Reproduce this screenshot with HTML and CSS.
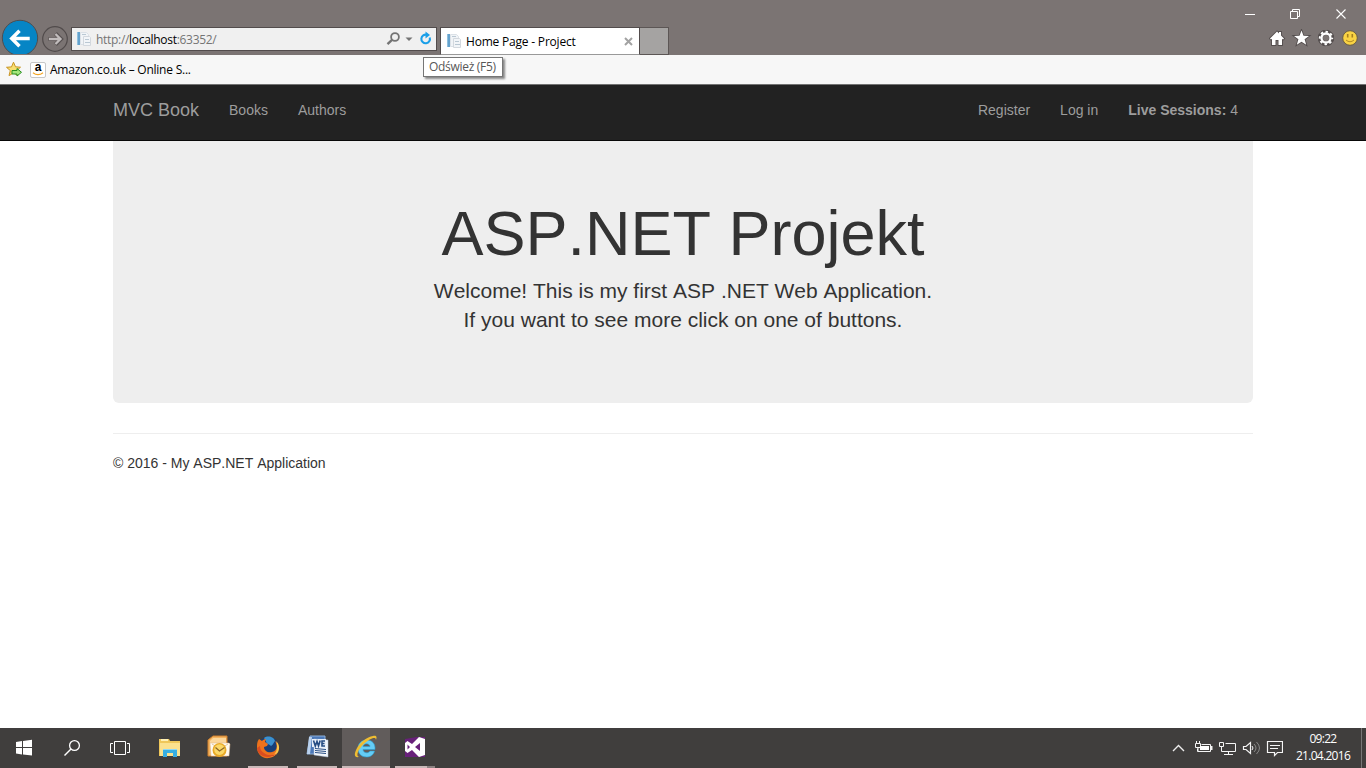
FILE: index.html
```html
<!DOCTYPE html>
<html lang="pl">
<head>
<meta charset="utf-8">
<title>Home Page - Project</title>
<link rel="stylesheet" href="styles.css">
</head>
<body>
<svg class="defs" width="0" height="0">
  <symbol id="page" viewBox="0 0 16 16">
    <rect x="1" y="1" width="3" height="13" fill="#64a2cd"/><rect x="1" y="1" width="1" height="13" fill="#8fc0df"/>
    <path d="M4.500 1.500h6l2 2v10h-8z" fill="#f1f4f7" stroke="#dbe1e7"/>
    <path d="M7.500 5.500h6l1 1v8h-7z" fill="#f2f5f8" stroke="#d3d8de"/>
    <path d="M6 3.500h4M9 8.500h4M9 11.500h5" stroke="#bac8d3"/>
  </symbol>
</svg>
<div class="screen">
  <header class="chrome">
    <div class="nav-buttons">
      <svg class="back" width="40" height="36" viewBox="0 0 40 36"><circle cx="20" cy="19.500" r="18.200" fill="#0685c5" stroke="#514b4b"/><path d="M30 20H12M19.500 12l-8 8 8 8" fill="none" stroke="#fff" stroke-width="3.600"/></svg>
      <svg class="forward" width="28" height="28" viewBox="0 0 28 28"><circle cx="14" cy="14" r="12.300" fill="none" stroke="#514b4b" stroke-width="1.200"/><path d="M7.500 14H19M14.500 8.500l5.500 5.500-5.500 5.500" fill="none" stroke="#585252" stroke-width="4"/><path d="M8 14H19M14.500 9l5 5-5 5" fill="none" stroke="#c1bcbc" stroke-width="2.300"/></svg>
    </div>
    <div class="address">
      <svg width="16" height="16"><use href="#page"/></svg>
      <span class="ui url">http://<b>localhost</b>:63352/</span>
      <svg width="50" height="18" viewBox="0 0 50 18"><circle cx="9" cy="7" r="3.900" fill="none" stroke="#747474" stroke-width="1.800"/><path d="M6.300 9.700l-4.800 4.500" stroke="#747474" stroke-width="2.400"/><path d="M19.500 7.500h7L23 11z" fill="#747474"/><path d="M43.700 7.500a4.300 4.300 0 1 1-2.800-2.700" fill="none" stroke="#1a9fe8" stroke-width="2.100"/><path d="M39.500 1.500l4.500 3.500-4.500 3.500z" fill="#1a9fe8"/></svg>
    </div>
    <div class="tab">
      <svg width="16" height="16"><use href="#page"/></svg>
      <span class="ui tab-title">Home Page - Project</span>
      <svg class="tab-close" width="9" height="9" viewBox="0 0 9 9"><path d="M1 1l7 7M8 1L1 8" stroke="#a2a2a2" stroke-width="2"/></svg>
    </div>
    <div class="new-tab"></div>
    <div class="right-tools">
      <svg class="window-controls" width="112" height="20" viewBox="0 0 112 20"><path d="M5 10.500h10M50.500 7.500h7v7h-7zM52.500 7.500v-2h7v7h-2" fill="none" stroke="#fff"/><path d="M96.500 5.500l9 9M105.500 5.500l-9 9" stroke="#fff" stroke-width="1.100"/></svg>
      <svg width="92" height="18" viewBox="0 0 92 18"><g stroke="#544e4e" stroke-width="1.800" fill="#fff" paint-order="stroke"><path d="M1 9.500L8 2.500l2 2V3h2v3.500l3 3-1 1-1-.8V16H9.500v-5h-3v5H3V9.700l-1 .8z"/><path d="M32.500 1.500l2 5.200 5.500.2-4.400 3.400 1.600 5.400-4.700-3-4.700 3 1.600-5.400L25 6.900l5.500-.2z"/></g><g fill="none"><circle cx="57" cy="9" r="5.500" stroke="#544e4e" stroke-width="5"/><circle cx="57" cy="9" r="6.200" stroke="#544e4e" stroke-width="4" stroke-dasharray="2.800 2.070"/><circle cx="57" cy="9" r="4.500" stroke="#fff" stroke-width="2.300"/><circle cx="57" cy="9" r="6.200" stroke="#fff" stroke-width="2" stroke-dasharray="2.400 2.470" stroke-dashoffset="1.200"/></g><circle cx="81" cy="9" r="7.300" fill="#f9d344" stroke="#685d45"/><path d="M78.700 5v3.500M83.300 5v3.500" stroke="#a5801f" stroke-width="1.600"/><path d="M77 11q4 3.500 8 0" fill="none" stroke="#b28d26"/></svg>
    </div>
  </header>
  <div class="favorites">
    <svg width="17" height="17" viewBox="0 0 17 17"><path d="M7.500 1.200l2 4.600 5 .4-3.800 3.300 1.200 5L7.500 12 3 14.600l1.300-5L.5 6.300l5-.4z" fill="#f8df70" stroke="#c89423" stroke-linejoin="round"/><path d="M6 9.500h5v-2l4.500 3.800L11 15v-2H6z" fill="#a4e57c" stroke="#288f20"/></svg>
    <span class="amazon"><b>a</b><svg width="12" height="4" viewBox="0 0 12 4"><path d="M1 .7q5 4 10 0" fill="none" stroke="#f5a623" stroke-width="1.300"/></svg></span>
    <span class="ui bookmark">Amazon.co.uk – Online S...</span>
    <span class="ui tooltip">Odśwież (F5)</span>
  </div>
  <main class="page">
    <nav class="navbar"><div class="container nav-inner">
      <a class="brand">MVC Book</a><a>Books</a><a>Authors</a>
      <div class="nav-right"><a>Register</a><a>Log in</a><span><b>Live Sessions:</b> 4</span></div>
    </div></nav>
    <div class="container">
      <section class="jumbotron"><h1>ASP.NET Projekt</h1><p>Welcome! This is my first ASP .NET Web Application.<br>If you want to see more click on one of buttons.</p></section>
      <hr><footer>© 2016 - My ASP.NET Application</footer>
    </div>
  </main>
  <div class="taskbar">
    <div class="slot"><svg width="18" height="18" viewBox="0 0 18 18"><path d="M1 3l6-.9v6H1zM8 2l9-1.200v7.300H8zM1 9h6v6.400l-6-.8zM8 9h9v7.600l-9-1.100z" fill="#fff"/></svg></div>
    <div class="slot"><svg width="18" height="18" viewBox="0 0 18 18"><circle cx="11.500" cy="6.500" r="4.900" fill="none" stroke="#fff" stroke-width="1.300"/><path d="M8 10l-6.500 6.500" stroke="#fff" stroke-width="1.500"/></svg></div>
    <div class="slot"><svg width="22" height="16" viewBox="0 0 22 16"><path d="M5.500 1.500h11v13h-11zM4 3.500H1.500v9H4M18 3.500h2.500v9H18" fill="none" stroke="#fff"/></svg></div>
    <div class="slot wide"><svg width="24" height="20" viewBox="0 0 24 20"><path d="M1 1h10l1 2h10v15H1z" fill="#efc75a"/><path d="M2 5h20v13H2z" fill="#fbe18e"/><path d="M3 1h7v2H3z" fill="#fff0b6"/><path d="M5 19v-8h14v8h-4v-4H9v4z" fill="#37aee2"/><path d="M5 11h14v1H5z" fill="#91d8f4"/></svg></div>
    <div class="slot outlook"><svg width="24" height="24" viewBox="0 0 24 24"><path d="M1 5l5-4h14v20H1z" fill="#f3b35f" stroke="#ce7e2c"/><path d="M6 3h13v5H3V6z" fill="#fbd79c"/><path d="M3 8h19l1 1-1 12H4z" fill="#fffaf0" stroke="#d8b28b" stroke-width=".5"/><path d="M5 9l8 5 8-5" fill="none" stroke="#dfc6a2"/><circle cx="12.500" cy="15" r="7" fill="#e9a926"/><circle cx="12.500" cy="14.600" r="5.300" fill="#fbd868"/><path d="M8.500 12.500l4 3.500 5-3.500" fill="none" stroke="#8b6424" stroke-width="1.200"/></svg></div>
    <div class="slot running"><svg width="24" height="24" viewBox="0 0 24 24"><circle cx="12.500" cy="11" r="9.500" fill="#173f78"/><path d="M8 3c4-3 10-1 11 3-1 1-2 4-4 5-2-2-5-2-5-5z" fill="#3b91ce"/><path d="M3 4l3 2c1-1 2-2 4-2L9 7l3 2-1 2-3 1c0 4 4 6 8 5 5-1 6-6 3-11 6 4 4 16-6 17C6 24 1 19 1 12c0-3 0-5 2-8z" fill="#ed721c"/><path d="M20 6c6 5 3 16-7 16 4-1 8-4 8-10 0-2 0-4-1-6z" fill="#f9c54b"/><path d="M1 13c0 5 5 9 11 9 4 0 7-1 9-4-4 3-9 3-13 0-3-2-4-4-4-7z" fill="#d94d20"/></svg></div>
    <div class="slot running word"><svg width="24" height="24" viewBox="0 0 24 24"><path d="M5 1h15v18H2z" fill="#4b78b8" stroke="#8eb0d9"/><path d="M4 2h3L5 19H2z" fill="#bad1ed"/><path d="M9 4l14 1v17l-14-2z" fill="#f3f7fc" stroke="#adbfd7" stroke-width=".5"/><path d="M10 13.500l11 1M10 15.500l11 1M10 17.500l11 1" stroke="#294e83"/><path d="M7 4h14v9L7 12z" fill="#e8eff8"/><path d="M8.500 5.500l1.800 5.500L12 6.500l1.500 4.500 1.700-5.500M20 6h-3v5h3M17 8.500h2.500" fill="none" stroke="#254c83" stroke-width="1.600"/></svg></div>
    <div class="slot running active"><svg width="26" height="24" viewBox="0 0 26 24"><path d="M21.500 16c-1 4-4 6-8 6-5 0-8.500-3.500-8.500-8.500S8.500 5 13.500 5c6 0 9 4 8.500 9.500H10c.4 3.500 5 4.500 7 1.500zM10 11.500h7c-.3-3.500-6.500-3.800-7 0z" fill="#65cdf6" stroke="#299fd5" stroke-width=".6"/><path d="M6 22c-5 1-5-3-2.500-8C7 7 14 2 20 1c4-.7 4 1.500 3 4-.2-2-1.500-2.500-4-1.500C13 6 7 12 5 17c-1 2.500-1 4.300 1 5z" fill="#efbd32"/></svg></div>
    <div class="slot running vs"><svg width="24" height="24" viewBox="0 0 24 24"><path d="M2 4l12-2h8v20H2z" fill="#68217a"/><path d="M16 2l6 2v16l-6 2-7-7-4.500 3L2 16V8l2.500-2L9 9zM17 8l-5 4 5 4zM4.500 9.500v5L7 12z" fill="#fff" fill-rule="evenodd"/></svg></div>
    <div class="tray">
      <svg width="112" height="20" viewBox="0 0 112 20"><path d="M2 13l5.500-5.500L13 13" fill="none" stroke="#eee" stroke-width="1.400"/><g fill="none" stroke="#f5f5f5"><path d="M30.500 6.500h9v7h-13v-3M24.500 5.500h5v4h-5zM25.500 3v2M28.500 3v2M27 9v4"/><path d="M40.500 8v4" stroke-width="2"/><path d="M54.500 5.500h10v8h-14v-4M57.500 14v3M53 16.500h9M48.500 4.500h4v4h-4zM50.500 9v4"/><path d="M72.500 8.500H75l4.500-4v11l-4.500-4h-2.500z" stroke-width="1.200"/><path d="M81 8q2 2 0 4"/><path d="M83 6q4 4 0 8M85.500 4q6 6 0 12" stroke="#888"/><path d="M96.500 3.500h15v11h-5l-3 3v-3h-7zM99 7.500h10M99 10.500h8" stroke-width="1.200"/></g><rect x="29" y="8" width="9" height="4" fill="#fff"/></svg>
    </div>
    <div class="clock ui"><span>09:22</span><span>21.04.2016</span></div><div class="show-desktop"></div>
  </div>
</div>
</body>
</html>
```

FILE: styles.css
```css
* { box-sizing: border-box; }
body { margin: 0; }
svg { display: block; flex: none; }
.defs { position: absolute; }
.screen { width: 1366px; height: 768px; overflow: hidden; display: flex; flex-direction: column; background: #fff; font-family: "Liberation Sans", Arial, sans-serif; }
.ui { font-family: "Open Sans", "Noto Sans", sans-serif; font-size: 12px; white-space: nowrap; }
.chrome { height: 55px; flex: none; display: flex; align-items: flex-end; background: #7b7473; }
.nav-buttons { width: 71px; height: 36px; display: flex; overflow: hidden; }
.back { height: 35px; }
.forward { margin: 6px 0 0 1px; }
.address { width: 366px; height: 24px; margin-bottom: 4px; border: 1px solid #524c4c; background: #f0f0f0; display: flex; align-items: center; padding: 0 0 0 4px; }
.url { margin-left: 4px; flex: 1; color: #747474; letter-spacing: -.3px; }
.url b { font-weight: 400; color: #000; }
.tab { width: 200px; height: 28px; margin-left: 3px; border: 1px solid #524c4c; border-bottom-color: #999; background: #fff; display: flex; align-items: center; padding: 0 6px 0 5px; }
.tab-title { margin-left: 4px; flex: 1; letter-spacing: -.2px; }
.new-tab { width: 29px; height: 28px; border: 1px solid #5c5655; border-left: 0; background: #a5a3a2; }
.right-tools { height: 55px; margin-left: auto; width: 126px; padding-top: 4px; display: flex; flex-direction: column; gap: 5px; }
.right-tools > svg:last-child { margin-left: 29px; }
.favorites { position: relative; height: 30px; flex: none; display: flex; align-items: center; padding-left: 6px; background: #f7f7f7; border-bottom: 1px solid #727272; }
.amazon { width: 16px; height: 16px; margin: 0 4px 0 7px; background: #fff; border: 1px solid #c7c7c7; border-radius: 2px; display: flex; flex-direction: column; align-items: center; font: bold 12px/9px "Liberation Sans", sans-serif; }
.bookmark { letter-spacing: -.23px; }
.tooltip { position: absolute; left: 423px; top: 2px; width: 80px; height: 20px; border: 1px solid #767676; background: #fff; color: #575757; line-height: 18px; padding-left: 5px; letter-spacing: -.3px; box-shadow: 2px 2px 2px rgba(0,0,0,.45); }
.page { flex: 1; min-height: 0; color: #333; font-size: 14px; line-height: 20px; font-kerning: none; }
.navbar { height: 56px; background: #222; border-bottom: 1px solid #080808; color: #9d9d9d; }
.container { width: 1140px; margin: 0 auto; }
.nav-inner { display: flex; gap: 30px; padding-top: 15px; }
.brand { font-size: 18px; }
.nav-right { display: flex; gap: 30px; margin: 0 15px 0 auto; }
.jumbotron { height: 262px; background: #eee; border-radius: 0 0 6px 6px; text-align: center; padding-top: 57px; }
h1 { font-size: 63px; line-height: 70px; font-weight: 400; margin: 0; }
.jumbotron p { font-size: 21px; line-height: 29px; margin: 8px 0 0; }
hr { border: 0; border-top: 1px solid #eee; margin: 30px 0 19px; }
.taskbar { height: 40px; flex: none; display: flex; background: #403e3d; }
.slot { width: 48px; height: 40px; display: flex; align-items: center; justify-content: center; }
.slot.wide { width: 52px; }
.slot.outlook { width: 46px; margin-right: 2px; padding-bottom: 2px; }
.slot.running { width: 40px; margin-right: 9px; border-bottom: 2px solid #c9b9b9; }
.slot.running:nth-child(6) { margin-left: 4px; }
.slot.running.word { margin-right: 5px; }
.slot.running.active { width: 48px; margin-right: 5px; background: #615c5b; }
.slot.running.vs { margin-right: 0; border-image: linear-gradient(to right, #c9b9b9 78%, #8c8282 78%) 1; border-width: 0 0 2px; }
.tray { margin-left: auto; width: 125px; padding-top: 10px; }
.clock { width: 54px; display: flex; flex-direction: column; align-items: center; padding-top: 2px; line-height: 17px; color: #fff; letter-spacing: -.7px; }
.show-desktop { width: 16px; }
.show-desktop::before { content: ""; display: block; height: 40px; margin-left: 11px; width: 1px; background: #777; }
```
